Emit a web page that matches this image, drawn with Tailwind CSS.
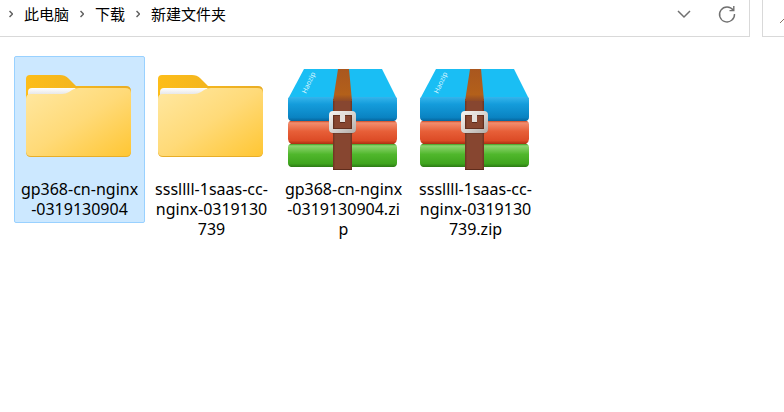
<!DOCTYPE html>
<html lang="zh-CN">
<head>
<meta charset="utf-8">
<title>新建文件夹</title>
<script src="https://cdn.jsdelivr.net/npm/@tailwindcss/browser@4"></script>
</head>
<body class="min-h-screen overflow-x-hidden bg-white text-black font-['Noto_Sans','Noto_Sans_CJK_SC',sans-serif]">
<svg class="absolute size-0" aria-hidden="true">
  <defs>
    <linearGradient id="back" x1="0" y1="0" x2="1" y2="0"><stop offset="0" stop-color="#fdbd19"/><stop offset="1" stop-color="#e9ad25"/></linearGradient>
    <linearGradient id="front" x1="0" y1="0" x2="1" y2="1"><stop offset="0" stop-color="#ffe8a2"/><stop offset=".5" stop-color="#ffda78"/><stop offset="1" stop-color="#ffc633"/></linearGradient>
    <linearGradient id="paper" x1="0" y1="0" x2="0" y2="1"><stop offset="0" stop-color="#fff"/><stop offset="1" stop-color="#dcdcdc"/></linearGradient>
    <linearGradient id="blue" x1="0" y1="0" x2="0" y2="1"><stop offset="0" stop-color="#35b5ec"/><stop offset=".3" stop-color="#149cdb"/><stop offset=".85" stop-color="#0a83c2"/><stop offset="1" stop-color="#06659c"/></linearGradient>
    <linearGradient id="red" x1="0" y1="0" x2="0" y2="1"><stop offset="0" stop-color="#c94824"/><stop offset=".08" stop-color="#f28d6e"/><stop offset=".45" stop-color="#e75f38"/><stop offset=".85" stop-color="#dc4b26"/><stop offset="1" stop-color="#a93012"/></linearGradient>
    <linearGradient id="green" x1="0" y1="0" x2="0" y2="1"><stop offset="0" stop-color="#3f9c22"/><stop offset=".08" stop-color="#8ed46f"/><stop offset=".45" stop-color="#50b72c"/><stop offset=".85" stop-color="#3fa51e"/><stop offset="1" stop-color="#2c7a14"/></linearGradient>
    <linearGradient id="strap" x1="0" y1="0" x2="1" y2="0"><stop offset="0" stop-color="#6c3421"/><stop offset=".12" stop-color="#874630"/><stop offset=".88" stop-color="#874630"/><stop offset="1" stop-color="#6c3421"/></linearGradient>
    <linearGradient id="fold" x1="0" y1="0" x2="0" y2="1"><stop offset="0" stop-color="#a9571f"/><stop offset=".8" stop-color="#b3601a"/><stop offset="1" stop-color="#8f4a28"/></linearGradient>
    <linearGradient id="metal" x1="0" y1="0" x2="1" y2="1"><stop offset="0" stop-color="#f2efec"/><stop offset=".5" stop-color="#d9d5d1"/><stop offset="1" stop-color="#b9b3ae"/></linearGradient>
    <symbol id="folder" viewBox="14 57 131 122">
      <path d="M26 97V79q0-4 4-4h30q5 0 8 3l4 4 4 4h50q5 0 5 5v61H26z" fill="url(#back)"/>
      <path d="M26 145v7q0 5 5 5h95q5 0 5-5v-7z" fill="#e8ae28"/>
      <path d="M28 97v-5q0-4 4-4h44l-10 8z" fill="url(#paper)"/>
      <path d="M26 99q0-5 5-5h31q4 0 7-2l3-2q3-2 7-2h46q6 0 6 5v58q0 5-5 5H31q-5 0-5-5z" fill="url(#front)"/>
    </symbol>
    <symbol id="archive" viewBox="278 57 131 122">
      <path d="M304 69h78l15 30H288z" fill="#1abef4"/>
      <path d="M290 97h105q2 0 2 3v17q0 3-3 4H291q-3-1-3-4v-17q0-3 2-3z" fill="url(#blue)"/>
      <path d="M290 121h105q2 1 2 3v15q0 3-3 5H291q-3-2-3-5v-15q0-2 2-3z" fill="url(#red)"/>
      <path d="M290 144h105q2 1 2 3v16q0 3-3 4H291q-3-1-3-4v-16q0-2 2-3z" fill="url(#green)"/>
      <path d="M333 99h19v71h-19z" fill="url(#strap)"/>
      <path d="M338 69h11l3 32h-19z" fill="url(#fold)"/>
      <path d="M333 169h19v1h-19z" fill="#5e2c1c"/>
      <rect x="331" y="114" width="23" height="18" rx="3" fill="none" stroke="#5b3527" stroke-opacity=".4" stroke-width="4"/>
      <rect x="331" y="113" width="23" height="18" rx="2" fill="none" stroke="url(#metal)" stroke-width="4"/>
      <path d="M333.500 115.500h18v13h-18z" fill="none" stroke="#63301f"/>
      <path d="M340 113h5v9h-5z" fill="#e4e0dc"/>
      <path d="M340 122.500h5" stroke="#5e2c1c"/>
      <text transform="translate(306 94) rotate(-65)" font-size="7" fill="#d8f5ff" font-family="Noto Sans, sans-serif">Haozip</text>
    </symbol>
  </defs>
</svg>

<header class="flex h-[37px] items-stretch gap-3">
  <div class="flex flex-1 items-center justify-between border-r border-b border-[#d9d9d9] pb-2 pr-3">
    <nav aria-label="路径" class="flex items-center gap-[11px] pl-[9px] text-[15px] leading-5">
      <svg class="h-2 w-1" viewBox="0 0 4 8" fill="none" stroke="#606060" stroke-width="1.500" aria-hidden="true"><path d="M.5 1l3 3-3 3"/></svg>
      <a href="#">此电脑</a>
      <svg class="h-2 w-1" viewBox="0 0 4 8" fill="none" stroke="#606060" stroke-width="1.500" aria-hidden="true"><path d="M.5 1l3 3-3 3"/></svg>
      <a href="#">下载</a>
      <svg class="h-2 w-1" viewBox="0 0 4 8" fill="none" stroke="#606060" stroke-width="1.500" aria-hidden="true"><path d="M.5 1l3 3-3 3"/></svg>
      <a href="#">新建文件夹</a>
    </nav>
    <div class="flex items-center gap-6">
      <button type="button" aria-label="以前的位置"><svg class="h-5 w-4" viewBox="0 0 16 20" fill="none" stroke="#707070" stroke-width="1.500" aria-hidden="true"><path d="M1 7l6 6 6-6"/></svg></button>
      <button type="button" aria-label="刷新"><svg class="size-5" viewBox="0 0 20 20" fill="none" stroke="#707070" stroke-width="1.400" aria-hidden="true"><path d="M16.200 6.200A7.500 7.500 0 1 0 17.500 10M16.800 2v4.600H12.500"/></svg></button>
    </div>
  </div>
  <div class="flex w-[22px] items-center justify-end overflow-hidden border-b border-l border-[#d9d9d9]">
    <svg class="h-4 w-1" viewBox="0 0 4 16" stroke="#8a7568" aria-hidden="true"><path d="M0 13l4-4"/></svg>
  </div>
</header>

<main class="flex flex-wrap items-start gap-px px-[14px] pt-[19px] text-center text-[16px] leading-5">
  <button type="button" aria-pressed="true" class="w-[131px] rounded-xs border border-[#99d1ff] bg-[#cce8ff] pb-[3px]">
    <svg class="-mx-px h-[122px] w-[131px]" aria-hidden="true"><use href="#folder"/></svg>
    <span class="block whitespace-nowrap">gp368-cn-nginx<br>-0319130904</span>
  </button>
  <button type="button" class="w-[131px] border border-transparent pb-[3px]">
    <svg class="-mx-px h-[122px] w-[131px]" aria-hidden="true"><use href="#folder"/></svg>
    <span class="block whitespace-nowrap">sssllll-1saas-cc-<br>nginx-0319130<br>739</span>
  </button>
  <button type="button" class="w-[131px] border border-transparent pb-[3px]">
    <svg class="-mx-px h-[122px] w-[131px]" aria-hidden="true"><use href="#archive"/></svg>
    <span class="block whitespace-nowrap">gp368-cn-nginx<br>-0319130904.zi<br>p</span>
  </button>
  <button type="button" class="w-[131px] border border-transparent pb-[3px]">
    <svg class="-mx-px h-[122px] w-[131px]" aria-hidden="true"><use href="#archive"/></svg>
    <span class="block whitespace-nowrap">sssllll-1saas-cc-<br>nginx-0319130<br>739.zip</span>
  </button>
</main>
</body>
</html>
